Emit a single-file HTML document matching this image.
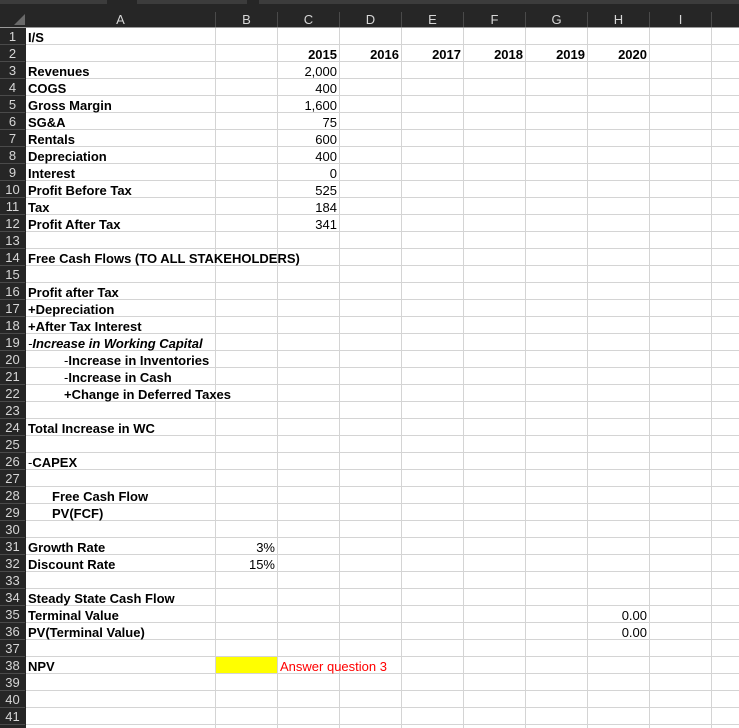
<!DOCTYPE html>
<html><head><meta charset="utf-8"><style>
*{margin:0;padding:0;box-sizing:border-box}
body{width:739px;height:728px;overflow:hidden;background:#fff;font-family:"Liberation Sans",Arial,sans-serif;position:relative}
.top{position:absolute;left:0;top:0;width:739px;height:28px;background:#262626}
.tab{position:absolute;top:0;height:4px;background:#3c3c3c}
.ch{position:absolute;top:12px;height:16px;color:#d6d6d6;font-size:13px;text-align:center;line-height:16px;border-right:1px solid #4a4a4a}
.rh{position:absolute;left:0;width:26px;background:#262626;height:700px;top:28px}
.rn{position:absolute;left:0;width:25px;height:17px;color:#d6d6d6;font-size:13px;line-height:17px;text-align:center;border-bottom:1px solid #4a4a4a}
.grid{position:absolute;left:26px;top:28px;width:713px;height:700px;
background-image:linear-gradient(to bottom,transparent 16px,#d4d4d4 16px),linear-gradient(to right,transparent 189px,#d4d4d4 189px,#d4d4d4 190px,transparent 190px,transparent 251px,#d4d4d4 251px,#d4d4d4 252px,transparent 252px,transparent 313px,#d4d4d4 313px,#d4d4d4 314px,transparent 314px,transparent 375px,#d4d4d4 375px,#d4d4d4 376px,transparent 376px,transparent 437px,#d4d4d4 437px,#d4d4d4 438px,transparent 438px,transparent 499px,#d4d4d4 499px,#d4d4d4 500px,transparent 500px,transparent 561px,#d4d4d4 561px,#d4d4d4 562px,transparent 562px,transparent 623px,#d4d4d4 623px,#d4d4d4 624px,transparent 624px,transparent 685px,#d4d4d4 685px,#d4d4d4 686px,transparent 686px);
background-size:100% 17px,100% 100%}
.t{position:absolute;font-size:13px;line-height:17px;height:17px;white-space:nowrap;color:#000;margin-top:1px}
.b{font-weight:bold}
.r{text-align:right;width:58px}
.n{font-weight:normal}
</style></head><body>
<div class="top"></div>
<div class="tab" style="left:0;width:107px"></div>
<div class="tab" style="left:137px;width:110px"></div>
<div class="tab" style="left:259px;width:480px"></div>
<div style="position:absolute;left:14px;top:14px;width:0;height:0;border-left:11px solid transparent;border-bottom:11px solid #6a6a6a"></div>
<div class="ch" style="left:26px;width:190px">A</div>
<div class="ch" style="left:216px;width:62px">B</div>
<div class="ch" style="left:278px;width:62px">C</div>
<div class="ch" style="left:340px;width:62px">D</div>
<div class="ch" style="left:402px;width:62px">E</div>
<div class="ch" style="left:464px;width:62px">F</div>
<div class="ch" style="left:526px;width:62px">G</div>
<div class="ch" style="left:588px;width:62px">H</div>
<div class="ch" style="left:650px;width:62px">I</div>
<div style="position:absolute;left:0;top:27px;width:739px;height:1px;background:#9a9a9a"></div>
<div class="rh">
<div class="rn" style="top:0">1</div><div class="rn" style="top:17px">2</div><div class="rn" style="top:34px">3</div><div class="rn" style="top:51px">4</div><div class="rn" style="top:68px">5</div><div class="rn" style="top:85px">6</div><div class="rn" style="top:102px">7</div><div class="rn" style="top:119px">8</div><div class="rn" style="top:136px">9</div><div class="rn" style="top:153px">10</div><div class="rn" style="top:170px">11</div><div class="rn" style="top:187px">12</div><div class="rn" style="top:204px">13</div><div class="rn" style="top:221px">14</div><div class="rn" style="top:238px">15</div><div class="rn" style="top:255px">16</div><div class="rn" style="top:272px">17</div><div class="rn" style="top:289px">18</div><div class="rn" style="top:306px">19</div><div class="rn" style="top:323px">20</div><div class="rn" style="top:340px">21</div><div class="rn" style="top:357px">22</div><div class="rn" style="top:374px">23</div><div class="rn" style="top:391px">24</div><div class="rn" style="top:408px">25</div><div class="rn" style="top:425px">26</div><div class="rn" style="top:442px">27</div><div class="rn" style="top:459px">28</div><div class="rn" style="top:476px">29</div><div class="rn" style="top:493px">30</div><div class="rn" style="top:510px">31</div><div class="rn" style="top:527px">32</div><div class="rn" style="top:544px">33</div><div class="rn" style="top:561px">34</div><div class="rn" style="top:578px">35</div><div class="rn" style="top:595px">36</div><div class="rn" style="top:612px">37</div><div class="rn" style="top:629px">38</div><div class="rn" style="top:646px">39</div><div class="rn" style="top:663px">40</div><div class="rn" style="top:680px">41</div>
</div>
<div class="grid"></div>
<div style="position:absolute;left:216px;top:657px;width:61px;height:16px;background:#ffff00"></div>

<div class="t b" style="left:28px;top:28px">I/S</div>
<div class="t b r" style="left:279px;top:45px">2015</div>
<div class="t b r" style="left:341px;top:45px">2016</div>
<div class="t b r" style="left:403px;top:45px">2017</div>
<div class="t b r" style="left:465px;top:45px">2018</div>
<div class="t b r" style="left:527px;top:45px">2019</div>
<div class="t b r" style="left:589px;top:45px">2020</div>
<div class="t b" style="left:28px;top:62px">Revenues</div><div class="t r" style="left:279px;top:62px">2,000</div>
<div class="t b" style="left:28px;top:79px">COGS</div><div class="t r" style="left:279px;top:79px">400</div>
<div class="t b" style="left:28px;top:96px">Gross Margin</div><div class="t r" style="left:279px;top:96px">1,600</div>
<div class="t b" style="left:28px;top:113px">SG&amp;A</div><div class="t r" style="left:279px;top:113px">75</div>
<div class="t b" style="left:28px;top:130px">Rentals</div><div class="t r" style="left:279px;top:130px">600</div>
<div class="t b" style="left:28px;top:147px">Depreciation</div><div class="t r" style="left:279px;top:147px">400</div>
<div class="t b" style="left:28px;top:164px">Interest</div><div class="t r" style="left:279px;top:164px">0</div>
<div class="t b" style="left:28px;top:181px">Profit Before Tax</div><div class="t r" style="left:279px;top:181px">525</div>
<div class="t b" style="left:28px;top:198px">Tax</div><div class="t r" style="left:279px;top:198px">184</div>
<div class="t b" style="left:28px;top:215px">Profit After Tax</div><div class="t r" style="left:279px;top:215px">341</div>
<div class="t b" style="left:28px;top:249px">Free Cash Flows (TO ALL STAKEHOLDERS)</div>
<div class="t b" style="left:28px;top:283px">Profit after Tax</div>
<div class="t b" style="left:28px;top:300px">+Depreciation</div>
<div class="t b" style="left:28px;top:317px">+After Tax Interest</div>
<div class="t b" style="left:28px;top:334px;font-style:italic"><span class="n">-</span>Increase in Working Capital</div>
<div class="t b" style="left:64px;top:351px"><span class="n">-</span>Increase in Inventories</div>
<div class="t b" style="left:64px;top:368px"><span class="n">-</span>Increase in Cash</div>
<div class="t b" style="left:64px;top:385px">+Change in Deferred Taxes</div>
<div class="t b" style="left:28px;top:419px">Total Increase in WC</div>
<div class="t b" style="left:28px;top:453px"><span class="n">-</span>CAPEX</div>
<div class="t b" style="left:52px;top:487px">Free Cash Flow</div>
<div class="t b" style="left:52px;top:504px">PV(FCF)</div>
<div class="t b" style="left:28px;top:538px">Growth Rate</div><div class="t r" style="left:217px;top:538px">3%</div>
<div class="t b" style="left:28px;top:555px">Discount Rate</div><div class="t r" style="left:217px;top:555px">15%</div>
<div class="t b" style="left:28px;top:589px">Steady State Cash Flow</div>
<div class="t b" style="left:28px;top:606px">Terminal Value</div><div class="t r" style="left:589px;top:606px">0.00</div>
<div class="t b" style="left:28px;top:623px">PV(Terminal Value)</div><div class="t r" style="left:589px;top:623px">0.00</div>
<div class="t b" style="left:28px;top:657px">NPV</div>
<div class="t" style="left:280px;top:657px;color:#ff0000">Answer question 3</div>
</body></html>
